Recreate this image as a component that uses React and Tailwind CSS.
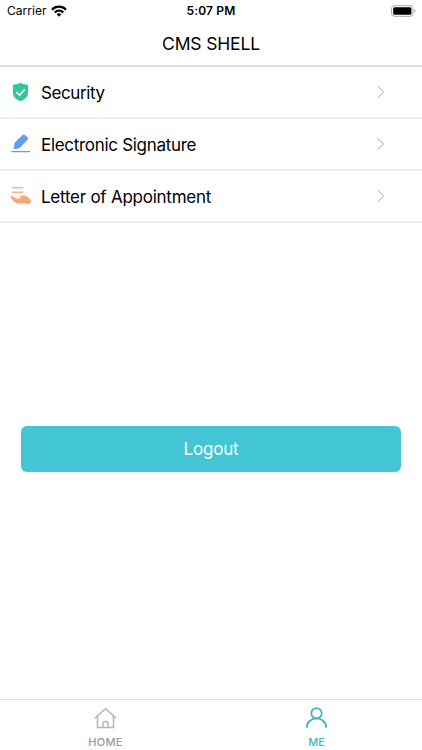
const rows = [
  { label: "Security", spacing: "tracking-[-0.4px]", icon: <ShieldIcon /> },
  { label: "Electronic Signature", spacing: "tracking-[-0.3px]", icon: <PenIcon /> },
  { label: "Letter of Appointment", spacing: "tracking-[-0.25px]", icon: <HandIcon /> },
];

function ShieldIcon() {
  return (
    <svg width="22" height="22" viewBox="0 0 22 22">
      <path d="M10.500 1.500C8.800 2.900 6 3.700 2.900 3.700V11.500C2.900 16 6 18.600 10.500 20.200C15 18.600 18.100 16 18.100 11.500V3.700C15 3.700 12.200 2.900 10.500 1.500Z" fill="#35c6a0" />
      <path d="M6.300 11.100L9.500 14.100L14.700 8.500" fill="none" stroke="#fff" strokeWidth="1.500" />
    </svg>
  );
}

function PenIcon() {
  return (
    <svg width="22" height="22" viewBox="0 0 22 22">
      <path d="M3.500 16L4.800 9.500L12.300 2.300C13.300 1.400 14.300 1.400 15.300 2.200L17.300 3.900C18.300 4.800 18.300 5.800 17.500 6.800L10.200 14.400C8.500 15.800 6 16 3.500 16Z" fill="#5f9df7" />
      <path d="M1.300 18.600H20" stroke="#5f9df7" strokeWidth="1.300" />
    </svg>
  );
}

function HandIcon() {
  return (
    <svg width="22" height="22" viewBox="0 0 22 22">
      <path d="M2 2.800H13.300M2 7.200H13.300" stroke="#f5b48c" strokeWidth="1.600" />
      <path d="M0.400 11C2.200 10.200 3.700 12.900 6 13.600H10.400C11.600 13.600 11.600 12.600 10.400 12.500H8.700C10.600 10.800 13 10.300 15.200 10.700C17 11.100 18.400 12.500 20.900 14.900V17.200L18 19.600L16 18.600H8.500C4.600 18.200 2 15 0.400 11Z" fill="#f5a774" />
    </svg>
  );
}

function StatusBar() {
  return (
    <div className="grid h-[22px] grid-cols-3 items-center px-[6px] text-[12px]">
      <div className="flex items-center gap-1 pl-px">
        <span className="tracking-[0.05px]">Carrier</span>
        <svg width="16" height="12" viewBox="0 0 16 12" fill="none" stroke="#000" strokeWidth="2.200">
          <path d="M1 4.700C5 .7 11 .7 15 4.700" />
          <path d="M3.700 7.500C6.200 5.100 9.800 5.100 12.300 7.500" />
          <path d="M5.700 9.200C7 8 9 8 10.300 9.200L8 11.700Z" fill="#000" stroke="none" />
        </svg>
      </div>
      <span className="text-center font-semibold tracking-[0.15px]">5:07 PM</span>
      <svg className="justify-self-end" width="26" height="12" viewBox="0 0 26 12">
        <rect x="1.500" y="0.700" width="21.500" height="10.600" rx="3" fill="none" stroke="#a8a8a8" />
        <rect x="3.200" y="2.300" width="18.200" height="7.400" rx="1.500" />
        <path d="M24.500 4.300C26 4.800 26 7.200 24.500 7.700Z" fill="#a8a8a8" />
      </svg>
    </div>
  );
}

export default function App() {
  return (
    <div className="flex h-[750px] w-[422px] flex-col bg-white font-['Inter',sans-serif] text-black">
      <StatusBar />
      <header className="flex h-[45px] items-center justify-center border-b-2 border-[#dfdfdf] text-[17.5px]">
        <h1 className="pt-px tracking-[-0.15px]">CMS SHELL</h1>
      </header>

      <ul>
        {rows.map((row) => (
          <li key={row.label} className="flex h-[52px] items-center border-b-2 border-[#eeeeee] pl-[10px] pr-9">
            {row.icon}
            <span className={`ml-[9px] flex-1 pt-[3px] text-[17px] ${row.spacing}`}>{row.label}</span>
            <svg width="10" height="14" viewBox="0 0 10 14" fill="none" stroke="#c8c8c8" strokeWidth="1.200">
              <path d="M1.500 1L7.500 7L1.500 13" />
            </svg>
          </li>
        ))}
      </ul>

      <div className="mt-[203px] px-[21px]">
        <button className="h-[46px] w-full rounded-[6px] bg-[#43c6d3] pt-[2px] text-[17px] tracking-[-0.2px] text-white">
          Logout
        </button>
      </div>

      <nav className="mt-auto grid h-[51px] grid-cols-2 border-t border-[#dedede] text-[11px] font-medium">
        <div className="flex flex-col items-center pt-[7px] text-[#999]">
          <svg width="23" height="22" viewBox="0 0 23 22" fill="none" stroke="#b5b5b5" strokeWidth="1.500">
            <path d="M0.800 11.200L11.500 1.700L22.200 11.200" />
            <path d="M3.500 9V20.500H19.500V9" />
            <path d="M9 20.500V16.500C9 13.800 14 13.800 14 16.500V20.500" />
          </svg>
          <span className="mt-[5px] leading-4 tracking-[0.3px]">HOME</span>
        </div>
        <div className="flex flex-col items-center pt-[7px] text-[#3fb6c6]">
          <svg width="23" height="22" viewBox="0 0 23 22" fill="none" stroke="#3fb6c6" strokeWidth="1.800">
            <circle cx="11.500" cy="6.300" r="5.200" />
            <path d="M1.700 20.800C2.200 8.300 20.800 8.300 21.300 20.800" />
          </svg>
          <span className="mt-[5px] leading-4 tracking-normal">ME</span>
        </div>
      </nav>
    </div>
  );
}
